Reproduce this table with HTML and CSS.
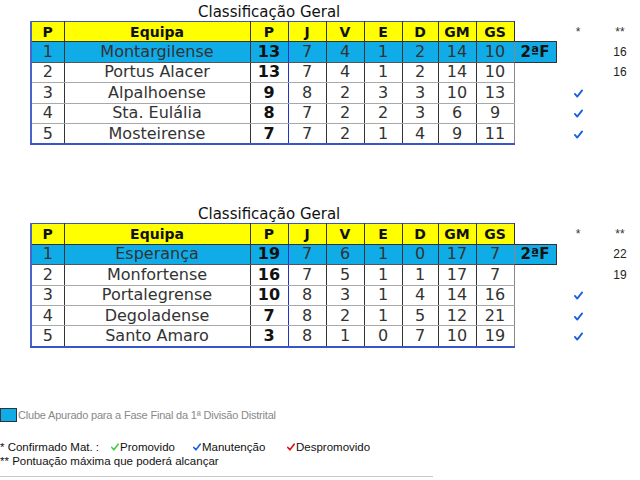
FILE: index.html
```html
<!DOCTYPE html>
<html lang="pt">
<head>
<meta charset="utf-8">
<title>Classificação Geral</title>
<link rel="stylesheet" href="styles.css">
</head>
<body>
<section class="standings">
  <table class="grid">
    <colgroup>
      <col class="c-pos"><col class="c-team"><col class="c-num"><col class="c-num"><col class="c-num"><col class="c-num"><col class="c-d"><col class="c-num"><col class="c-num"><col class="c-phase"><col class="c-sp"><col class="c-star"><col class="c-sp2"><col class="c-max">
    </colgroup>
    <caption class="title">Classificação Geral</caption>
    <thead>
      <tr class="head">
        <th>P</th><th>Equipa</th><th class="pts">P</th><th>J</th><th>V</th><th>E</th><th>D</th><th>GM</th><th class="last">GS</th>
        <th class="x"></th><th class="x"></th><th class="x note">*</th><th class="x"></th><th class="x note">**</th>
      </tr>
    </thead>
    <tbody>
      <tr class="hl"><td>1</td><td>Montargilense</td><td class="pts">13</td><td>7</td><td>4</td><td>1</td><td>2</td><td>14</td><td class="last">10</td><td class="phase">2ªF</td><td class="x"></td><td class="x"></td><td class="x"></td><td class="x max">16</td></tr>
      <tr><td>2</td><td>Portus Alacer</td><td class="pts">13</td><td>7</td><td>4</td><td>1</td><td>2</td><td>14</td><td class="last">10</td><td class="x"></td><td class="x"></td><td class="x"></td><td class="x"></td><td class="x max">16</td></tr>
      <tr><td>3</td><td>Alpalhoense</td><td class="pts">9</td><td>8</td><td>2</td><td>3</td><td>3</td><td>10</td><td class="last">13</td><td class="x"></td><td class="x"></td><td class="x"><svg class="tick blue" viewBox="0 0 10 10"><path d="M1 5.5 L3.6 8.5 L9 1.5"/></svg></td><td class="x"></td><td class="x"></td></tr>
      <tr><td>4</td><td>Sta. Eulália</td><td class="pts">8</td><td>7</td><td>2</td><td>2</td><td>3</td><td>6</td><td class="last">9</td><td class="x"></td><td class="x"></td><td class="x"><svg class="tick blue" viewBox="0 0 10 10"><path d="M1 5.5 L3.6 8.5 L9 1.5"/></svg></td><td class="x"></td><td class="x"></td></tr>
      <tr class="end"><td>5</td><td>Mosteirense</td><td class="pts">7</td><td>7</td><td>2</td><td>1</td><td>4</td><td>9</td><td class="last">11</td><td class="x"></td><td class="x"></td><td class="x"><svg class="tick blue" viewBox="0 0 10 10"><path d="M1 5.5 L3.6 8.5 L9 1.5"/></svg></td><td class="x"></td><td class="x"></td></tr>
    </tbody>
  </table>
</section>

<section class="standings second">
  <table class="grid">
    <colgroup>
      <col class="c-pos"><col class="c-team"><col class="c-num"><col class="c-num"><col class="c-num"><col class="c-num"><col class="c-d"><col class="c-num"><col class="c-num"><col class="c-phase"><col class="c-sp"><col class="c-star"><col class="c-sp2"><col class="c-max">
    </colgroup>
    <caption class="title">Classificação Geral</caption>
    <thead>
      <tr class="head">
        <th>P</th><th>Equipa</th><th class="pts">P</th><th>J</th><th>V</th><th>E</th><th>D</th><th>GM</th><th class="last">GS</th>
        <th class="x"></th><th class="x"></th><th class="x note">*</th><th class="x"></th><th class="x note">**</th>
      </tr>
    </thead>
    <tbody>
      <tr class="hl"><td>1</td><td>Esperança</td><td class="pts">19</td><td>7</td><td>6</td><td>1</td><td>0</td><td>17</td><td class="last">7</td><td class="phase">2ªF</td><td class="x"></td><td class="x"></td><td class="x"></td><td class="x max">22</td></tr>
      <tr><td>2</td><td>Monfortense</td><td class="pts">16</td><td>7</td><td>5</td><td>1</td><td>1</td><td>17</td><td class="last">7</td><td class="x"></td><td class="x"></td><td class="x"></td><td class="x"></td><td class="x max">19</td></tr>
      <tr><td>3</td><td>Portalegrense</td><td class="pts">10</td><td>8</td><td>3</td><td>1</td><td>4</td><td>14</td><td class="last">16</td><td class="x"></td><td class="x"></td><td class="x"><svg class="tick blue" viewBox="0 0 10 10"><path d="M1 5.5 L3.6 8.5 L9 1.5"/></svg></td><td class="x"></td><td class="x"></td></tr>
      <tr><td>4</td><td>Degoladense</td><td class="pts">7</td><td>8</td><td>2</td><td>1</td><td>5</td><td>12</td><td class="last">21</td><td class="x"></td><td class="x"></td><td class="x"><svg class="tick blue" viewBox="0 0 10 10"><path d="M1 5.5 L3.6 8.5 L9 1.5"/></svg></td><td class="x"></td><td class="x"></td></tr>
      <tr class="end"><td>5</td><td>Santo Amaro</td><td class="pts">3</td><td>8</td><td>1</td><td>0</td><td>7</td><td>10</td><td class="last">19</td><td class="x"></td><td class="x"></td><td class="x"><svg class="tick blue" viewBox="0 0 10 10"><path d="M1 5.5 L3.6 8.5 L9 1.5"/></svg></td><td class="x"></td><td class="x"></td></tr>
    </tbody>
  </table>
</section>

<footer class="legend">
  <p class="qualified"><span class="swatch"></span>Clube Apurado para a Fase Final da 1ª Divisão Distrital</p>
  <div class="notes">
    <p class="note-line"><span class="lbl">* Confirmado Mat. :</span>
      <span class="key k1"><svg class="tick green" viewBox="0 0 10 10"><path d="M1 5.5 L3.6 8.5 L9 1.5"/></svg>Promovido</span>
      <span class="key k2"><svg class="tick blue" viewBox="0 0 10 10"><path d="M1 5.5 L3.6 8.5 L9 1.5"/></svg>Manutenção</span>
      <span class="key k3"><svg class="tick red" viewBox="0 0 10 10"><path d="M1 5.5 L3.6 8.5 L9 1.5"/></svg>Despromovido</span>
    </p>
    <p class="note-line">** Pontuação máxima que poderá alcançar</p>
  </div>
  <hr class="rule">
</footer>
</body>
</html>
```

FILE: styles.css
```css
html, body {
  margin: 0;
  padding: 0;
  background: #fff;
}

body {
  width: 640px;
  height: 480px;
  overflow: hidden;
  font-family: "DejaVu Sans", Verdana, sans-serif;
  color: #333;
}

.standings {
  padding-left: 30px;
}

.second {
  margin-top: 57px;
}

.grid {
  border-collapse: collapse;
  table-layout: fixed;
  width: 605px;
}

.c-pos { width: 33px; }
.c-team { width: 186px; }
.c-num { width: 38px; }
.c-d { width: 36px; }
.c-phase { width: 42px; }
.c-sp { width: 10px; }
.c-star { width: 24px; }
.c-sp2 { width: 14px; }
.c-max { width: 32px; }

.title {
  caption-side: top;
  text-align: left;
  padding: 3px 0 0 168px;
  height: 18px;
  font-size: 15px;
  line-height: 18px;
  color: #111;
  white-space: nowrap;
}

.grid th,
.grid td {
  padding: 0;
  height: 19.4px;
  text-align: center;
  font-size: 16px;
  line-height: 18px;
  border-left: 1px solid #333;
  border-right: 1px solid #333;
  border-top: 1px solid #a8a8a8;
  border-bottom: 1px solid #a8a8a8;
  white-space: nowrap;
}

.grid th {
  background: #ffff00;
  font-size: 14px;
  font-weight: bold;
  color: #111;
  border-top: 1px solid #3b55c8;
  border-bottom: 1px solid #333;
}

.grid tr > :first-child {
  border-left: 2px solid #4a64c8;
}

.grid .pts {
  border-left: 1px solid #2233cc;
  border-right: 1px solid #2233cc;
  font-weight: bold;
  color: #111;
}

.grid .last {
  border-right: 1px solid #888;
}

.grid th.last {
  border-right: 1px solid #333;
}

.grid .hl td {
  background: #10ace8;
  border-top: 1px solid #333;
  border-bottom: 1px solid #555;
}

.grid .hl .pts {
  border-left: 1px solid #2233cc;
  border-right: 1px solid #2233cc;
}

.grid .end td {
  border-bottom: 2px solid #3b55c8;
}

.grid .x,
.grid .hl .x,
.grid .end .x,
.grid th.x {
  background: transparent;
  border: none;
  font-weight: normal;
}

.grid th.note {
  font-size: 12px;
  color: #333;
  font-family: "Liberation Sans", Arial, sans-serif;
}

.grid .max {
  font-size: 12px;
  color: #222;
  font-family: "Liberation Sans", Arial, sans-serif;
}

.grid .hl .phase {
  background: #10ace8;
  border: 1px solid #333;
  font-weight: bold;
  font-size: 15px;
  color: #111;
}

.tick {
  width: 9px;
  height: 9px;
  vertical-align: middle;
}

.tick path {
  fill: none;
  stroke-width: 2;
  stroke-linecap: round;
  stroke-linejoin: round;
}

.tick.blue path { stroke: #1860e0; }
.tick.green path { stroke: #40d040; }
.tick.red path { stroke: #e01010; }

.legend {
  margin-top: 60px;
  font-family: "Liberation Sans", Arial, sans-serif;
}

.qualified {
  margin: 0;
  display: flex;
  align-items: center;
  font-size: 11px;
  color: #888;
  height: 14px;
  letter-spacing: -0.2px;
}

.swatch {
  display: inline-block;
  width: 15px;
  height: 12px;
  background: #10ace8;
  border: 1px solid #333;
  margin-right: 1px;
}

.notes {
  margin-top: 18px;
}

.note-line {
  margin: 0;
  font-size: 11.5px;
  line-height: 14px;
  color: #111;
  display: flex;
  align-items: center;
  white-space: pre;
}

.lbl {
  width: 111px;
}

.key {
  display: inline-flex;
  align-items: center;
}

.k1 { width: 82px; }
.k2 { width: 94px; }

.key .tick {
  width: 8px;
  height: 8px;
  margin-right: 1px;
}

.rule {
  margin: 8px 0 0;
  width: 433px;
  border: none;
  border-top: 1px solid #c8c8c8;
}
```
